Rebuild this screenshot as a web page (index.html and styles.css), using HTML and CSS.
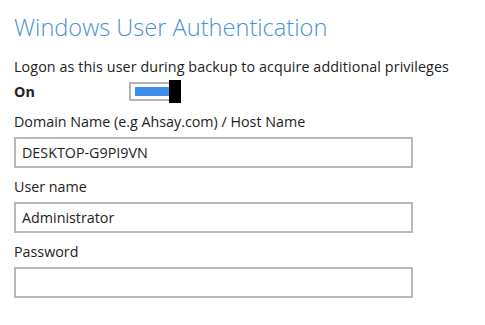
FILE: index.html
```html
<!DOCTYPE html>
<html>
<head>
<meta charset="utf-8">
<link rel="stylesheet" href="styles.css">
</head>
<body>
<div class="page">
  <h1 class="title">Windows User Authentication</h1>
  <div class="label">Logon as this user during backup to acquire additional privileges</div>
  <div class="toggle-row">
    <span class="on">On</span>
    <span class="toggle"><span class="track"><span class="bar"></span></span><span class="knob"></span></span>
  </div>
  <div class="label mt">Domain Name (e.g Ahsay.com) / Host Name</div>
  <div class="input">DESKTOP-G9PI9VN</div>
  <div class="label mt">User name</div>
  <div class="input">Administrator</div>
  <div class="label mt">Password</div>
  <div class="input"></div>
</div>
</body>
</html>
```
FILE: styles.css
```css
html, body { margin: 0; padding: 0; background: #fff; }
.page {
  font-family: "Open Sans", sans-serif;
  color: #222;
  padding: 9px 0 0 14px;
}
.title {
  margin: 0;
  font-weight: 300;
  font-size: 23.6px;
  line-height: 36px;
  color: #4a90d9;
}
.label {
  font-size: 14.3px;
  line-height: 20px;
  margin-top: 12px;
  white-space: nowrap;
  letter-spacing: 0.1px;
}
.label.mt { margin-top: 9px; letter-spacing: 0; }
.toggle-row {
  display: flex;
  align-items: center;
  height: 24px;
  margin-top: 2px;
}
.on {
  font-weight: 700;
  font-size: 14.3px;
  width: 115px;
}
.toggle {
  display: flex;
  align-items: center;
}
.track {
  display: flex;
  align-items: center;
  width: 36px;
  height: 15px;
  border: 2px solid #b4b4b4;
  padding: 0 0 0 4px;
  background: #fff;
}
.bar {
  width: 34px;
  height: 9px;
  background: #3d8ee8;
}
.knob {
  width: 12px;
  height: 23px;
  background: #000;
  margin-left: -4px;
}
.input {
  box-sizing: border-box;
  width: 399px;
  height: 31px;
  border: 2px solid #b8b8b8;
  margin-top: 5px;
  padding: 0 6px;
  font-size: 14.3px;
  line-height: 27px;
}
```
